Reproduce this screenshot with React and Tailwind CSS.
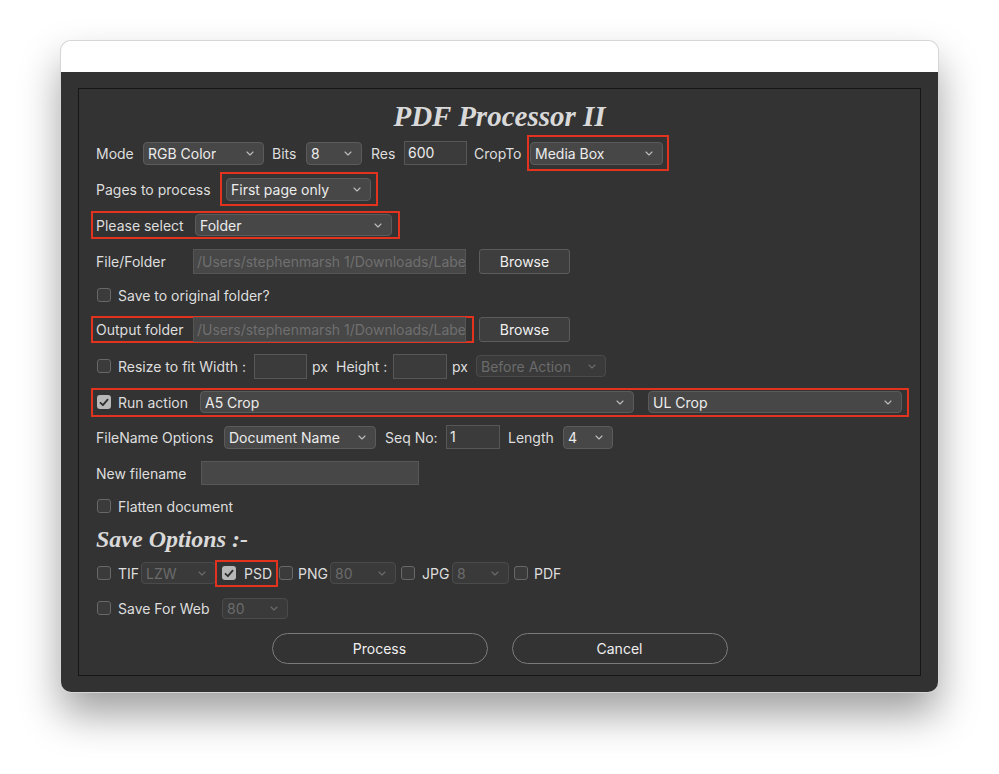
import React from "react"

const Chevron = ({ dim }) => (
  <svg width="8" height="5" viewBox="0 0 8 5" className="shrink-0">
    <path d="M1 1l3 3 3-3" fill="none" stroke={dim ? "#6c6c6c" : "#bdbdbd"} strokeWidth="1.1" strokeLinecap="round" strokeLinejoin="round" />
  </svg>
)

function Select({ value, className = "", disabled }) {
  return (
    <div
      className={`flex shrink-0 items-center justify-between rounded-[4px] border pl-[4px] pr-[9px] ${
        disabled ? "border-[#4b4b4b] bg-[#3a3a3a] text-[#6b6b6b]" : "border-[#5b5b5b] bg-[#474747] text-[#ececec]"
      } ${className}`}
    >
      <span className="truncate">{value}</span>
      <Chevron dim={disabled} />
    </div>
  )
}

function Checkbox({ checked }) {
  if (checked) {
    return (
      <span className="flex h-[14px] w-[14px] shrink-0 items-center justify-center rounded-[3px] bg-[#b8b8b8]">
        <svg width="10" height="9" viewBox="0 0 10 9">
          <path d="M1.5 4.8l2.4 2.4L8.6 1.6" fill="none" stroke="#2e2e2e" strokeWidth="1.8" strokeLinecap="round" strokeLinejoin="round" />
        </svg>
      </span>
    )
  }
  return <span className="block h-[14px] w-[14px] shrink-0 rounded-[3px] border border-[#686868] bg-[#3b3b3b]" />
}

function Browse() {
  return (
    <div className="ml-[13px] flex h-[25px] w-[91px] shrink-0 items-center justify-center rounded-[3px] border border-[#5c5c5c] bg-[#3e3e3e] text-[#f0f0f0]">
      Browse
    </div>
  )
}

function PathInput() {
  return (
    <div className="flex h-[25px] w-[273px] shrink-0 items-center overflow-hidden whitespace-nowrap border border-[#555555] bg-[#474747] pl-[3px] text-[#6f6f6f]">
      /Users/stephenmarsh 1/Downloads/Labe
    </div>
  )
}

export default function App() {
  return (
    <div className="min-h-screen bg-white pl-[61px] pt-[41px] font-['Inter','Noto_Sans',sans-serif] text-[14px] text-[#dedede]">
      <div className="flex h-[651px] w-[877px] flex-col rounded-[10px] shadow-[0_22px_40px_rgba(0,0,0,0.38)] ring-1 ring-[#d6d6d6]">
        {/* title bar */}
        <div className="h-[31px] shrink-0 rounded-t-[10px] bg-white" />

        <div className="flex-1 rounded-b-[10px] bg-[#323232] px-[17px] py-[16px]">
          <div className="flex h-full flex-col border border-[#161616] bg-[#333333] pl-[17px] pt-[8px]">
            {/* heading */}
            <div className="flex h-[38px] items-center justify-center pr-[17px]">
              <h1 className="font-['Liberation_Serif',serif] text-[29px] font-bold italic leading-none text-[#d9d9d9]">PDF Processor II</h1>
            </div>

            {/* mode row */}
            <div className="flex h-[36px] items-center">
              <span className="w-[47px] shrink-0">Mode</span>
              <Select value="RGB Color" className="h-[23px] w-[121px]" />
              <span className="ml-[8px] w-[34px] shrink-0">Bits</span>
              <Select value="8" className="h-[23px] w-[56px]" />
              <span className="ml-[9px] w-[33px] shrink-0">Res</span>
              <div className="flex h-[24px] w-[63px] shrink-0 items-start border border-[#575757] bg-[#3b3b3b] pl-[3px] text-[#ececec]">600</div>
              <span className="ml-[7px] w-[53px] shrink-0">CropTo</span>
              <div className="flex h-[36px] w-[142px] shrink-0 items-center border-2 border-[#e2331f] pl-[1px]">
                <Select value="Media Box" className="h-[23px] w-[133px]" />
              </div>
            </div>

            {/* pages */}
            <div className="flex h-[36px] items-center">
              <span className="w-[124px] shrink-0">Pages to process</span>
              <div className="flex h-[34px] w-[158px] shrink-0 items-center border-2 border-[#e2331f] pl-[4px]">
                <Select value="First page only" className="h-[23px] w-[145px]" />
              </div>
            </div>

            {/* please select */}
            <div className="-ml-[5px] flex h-[36px] items-center">
              <div className="flex h-[28px] w-[309px] shrink-0 items-center border-2 border-[#e2331f] pl-[3px]">
                <span className="w-[99px] shrink-0">Please select</span>
                <Select value="Folder" className="h-[22px] w-[197px]" />
              </div>
            </div>

            {/* file / folder */}
            <div className="flex h-[36px] items-center">
              <span className="w-[97px] shrink-0">File/Folder</span>
              <PathInput />
              <Browse />
            </div>

            {/* save to original */}
            <div className="flex h-[32px] items-center">
              <span className="ml-[1px]"><Checkbox /></span>
              <span className="ml-[7px]">Save to original folder?</span>
            </div>

            {/* output folder */}
            <div className="-ml-[5px] flex h-[36px] items-center">
              <div className="flex h-[27px] w-[383px] shrink-0 items-center border-2 border-[#e2331f] pl-[3px]">
                <span className="w-[97px] shrink-0 overflow-hidden whitespace-nowrap">Output folder</span>
                <PathInput />
              </div>
              <div className="-ml-[8px]">
                <Browse />
              </div>
            </div>

            {/* resize */}
            <div className="flex h-[38px] items-center">
              <span className="ml-[1px]"><Checkbox /></span>
              <span className="ml-[7px] w-[136px] shrink-0 whitespace-nowrap">Resize to fit Width :</span>
              <div className="h-[25px] w-[53px] shrink-0 border border-[#575757] bg-[#3b3b3b]" />
              <span className="ml-[5px] w-[24px] shrink-0">px</span>
              <span className="w-[57px] shrink-0">Height :</span>
              <div className="h-[25px] w-[54px] shrink-0 border border-[#575757] bg-[#3b3b3b]" />
              <span className="ml-[5px] w-[24px] shrink-0">px</span>
              <Select value="Before Action" disabled className="h-[22px] w-[130px]" />
            </div>

            {/* run action */}
            <div className="-ml-[5px] flex h-[34px] items-center">
              <div className="flex h-[29px] w-[818px] shrink-0 items-center border-2 border-[#e2331f] pl-[4px]">
                <Checkbox checked />
                <span className="ml-[7px] w-[82px] shrink-0">Run action</span>
                <Select value="A5 Crop" className="h-[22px] w-[434px]" />
                <Select value="UL Crop" className="ml-[14px] h-[22px] w-[254px]" />
              </div>
            </div>

            {/* filename options */}
            <div className="flex h-[36px] items-center">
              <span className="w-[128px] shrink-0">FileName Options</span>
              <Select value="Document Name" className="h-[23px] w-[152px]" />
              <span className="ml-[9px] w-[61px] shrink-0">Seq No:</span>
              <div className="flex h-[24px] w-[54px] shrink-0 items-start border border-[#575757] bg-[#3b3b3b] pl-[3px] text-[#ececec]">1</div>
              <span className="ml-[8px] w-[55px] shrink-0">Length</span>
              <Select value="4" className="h-[23px] w-[50px]" />
            </div>

            {/* new filename */}
            <div className="flex h-[36px] items-center">
              <span className="w-[105px] shrink-0">New filename</span>
              <div className="h-[24px] w-[218px] shrink-0 border border-[#575757] bg-[#474747]" />
            </div>

            {/* flatten */}
            <div className="flex h-[30px] items-center">
              <span className="ml-[1px]"><Checkbox /></span>
              <span className="ml-[7px]">Flatten document</span>
            </div>

            {/* save options heading */}
            <div className="flex h-[36px] items-center">
              <span className="font-['Liberation_Serif',serif] text-[24px] font-bold italic text-[#d9d9d9]">Save Options :-</span>
            </div>

            {/* formats */}
            <div className="flex h-[32px] items-center">
              <span className="ml-[1px]"><Checkbox /></span>
              <span className="ml-[7px] w-[23px] shrink-0">TIF</span>
              <Select value="LZW" disabled className="h-[22px] w-[75px]" />
              <div className="-ml-[1px] flex h-[27px] w-[63px] shrink-0 items-center border-2 border-[#e2331f] pl-[5px]">
                <Checkbox checked />
                <span className="ml-[8px]">PSD</span>
              </div>
              <span className="ml-[1px]"><Checkbox /></span>
              <span className="ml-[5px] w-[32px] shrink-0">PNG</span>
              <Select value="80" disabled className="h-[22px] w-[66px]" />
              <span className="ml-[5px]"><Checkbox /></span>
              <span className="ml-[7px] w-[30px] shrink-0">JPG</span>
              <Select value="8" disabled className="h-[22px] w-[57px]" />
              <span className="ml-[5px]"><Checkbox /></span>
              <span className="ml-[6px]">PDF</span>
            </div>

            {/* save for web */}
            <div className="flex h-[38px] items-center">
              <span className="ml-[1px]"><Checkbox /></span>
              <span className="ml-[7px] w-[104px] shrink-0">Save For Web</span>
              <Select value="80" disabled className="h-[21px] w-[66px]" />
            </div>

            {/* buttons */}
            <div className="flex h-[42px] items-center justify-center gap-[24px] pr-[17px]">
              <button className="h-[31px] w-[216px] rounded-full border border-[#7a7a7a] text-[#f0f0f0]">Process</button>
              <button className="h-[31px] w-[216px] rounded-full border border-[#7a7a7a] text-[#f0f0f0]">Cancel</button>
            </div>
          </div>
        </div>
      </div>
    </div>
  )
}
